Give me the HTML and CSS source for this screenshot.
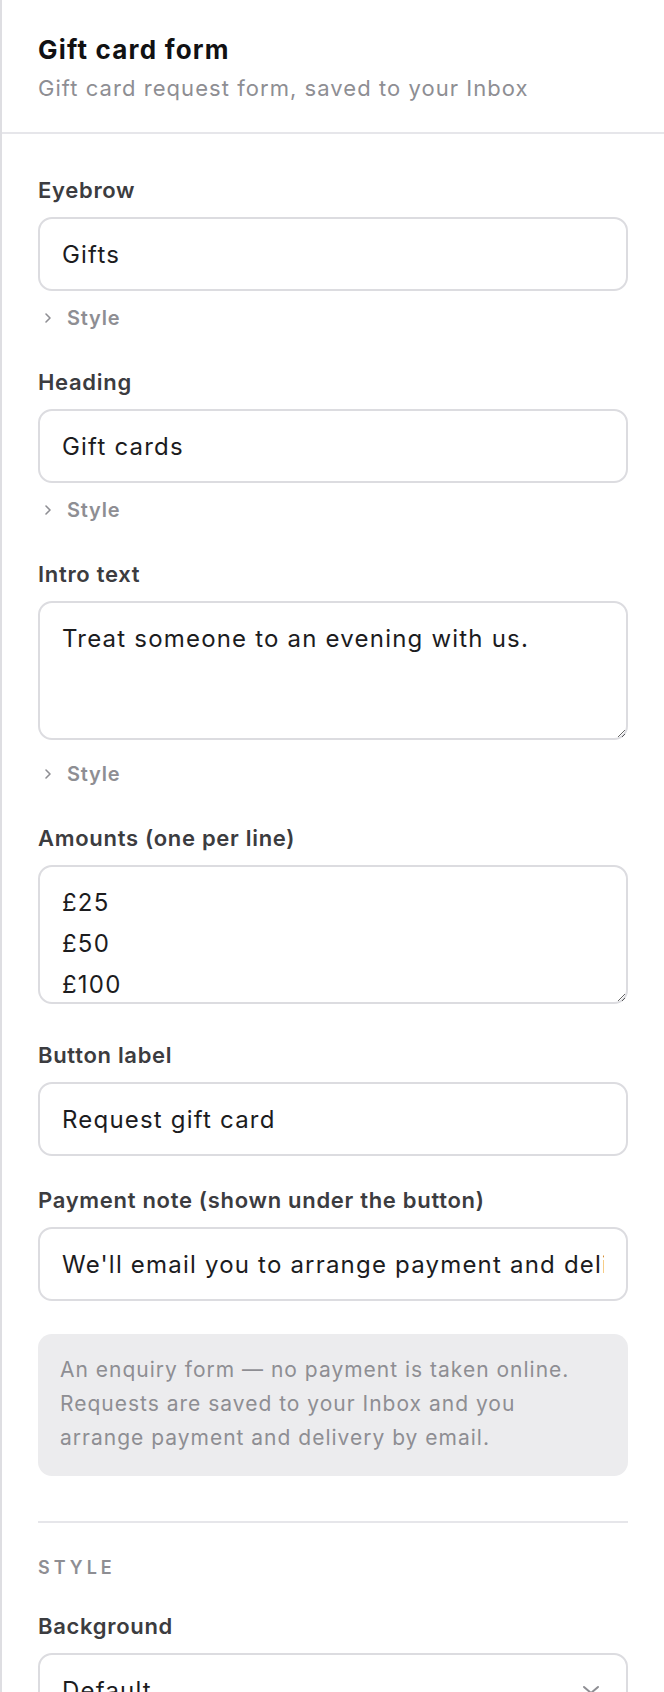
FILE: index.html
```html
<!DOCTYPE html>
<html lang="en">
<head>
<meta charset="utf-8">
<title>Gift card form</title>
<link rel="stylesheet" href="styles.css">
</head>
<body>
<div class="panel">
  <header class="panel-head">
    <h1 class="title">Gift card form</h1>
    <p class="subtitle">Gift card request form, saved to your Inbox</p>
  </header>
  <div class="panel-body">
    <div class="field has-style">
      <label class="label">Eyebrow</label>
      <input class="input" type="text" value="Gifts">
      <div class="style-toggle">
        <svg class="chev" viewBox="0 0 10 14" width="10" height="14"><polyline points="3,3 7,7 3,11" fill="none" stroke="#8e8e93" stroke-width="1.6" stroke-linecap="round" stroke-linejoin="round"/></svg>
        <span>Style</span>
      </div>
    </div>
    <div class="field has-style">
      <label class="label">Heading</label>
      <input class="input" type="text" value="Gift cards">
      <div class="style-toggle">
        <svg class="chev" viewBox="0 0 10 14" width="10" height="14"><polyline points="3,3 7,7 3,11" fill="none" stroke="#8e8e93" stroke-width="1.6" stroke-linecap="round" stroke-linejoin="round"/></svg>
        <span>Style</span>
      </div>
    </div>
    <div class="field has-style">
      <label class="label">Intro text</label>
      <textarea class="textarea">Treat someone to an evening with us.</textarea>
      <div class="style-toggle">
        <svg class="chev" viewBox="0 0 10 14" width="10" height="14"><polyline points="3,3 7,7 3,11" fill="none" stroke="#8e8e93" stroke-width="1.6" stroke-linecap="round" stroke-linejoin="round"/></svg>
        <span>Style</span>
      </div>
    </div>
    <div class="field">
      <label class="label">Amounts (one per line)</label>
      <textarea class="textarea">£25
£50
£100</textarea>
    </div>
    <div class="field">
      <label class="label">Button label</label>
      <input class="input" type="text" value="Request gift card">
    </div>
    <div class="field">
      <label class="label">Payment note (shown under the button)</label>
      <input class="input" type="text" value="We'll email you to arrange payment and delivery.">
    </div>
    <div class="note">An enquiry form — no payment is taken online. Requests are saved to your Inbox and you arrange payment and delivery by email.</div>
    <hr class="divider">
    <div class="section-title">STYLE</div>
    <div class="field">
      <label class="label">Background</label>
      <div class="select">
        <span>Default</span>
        <svg class="select-chev" viewBox="0 0 18 10" width="18" height="10"><polyline points="2,2 9,8 16,2" fill="none" stroke="#8e8e93" stroke-width="2" stroke-linecap="round" stroke-linejoin="round"/></svg>
      </div>
    </div>
  </div>
</div>
</body>
</html>
```
FILE: styles.css
```css
* { box-sizing: border-box; }
html, body { margin: 0; padding: 0; background: #ffffff; }
body {
  font-family: Inter, "Noto Sans", "DejaVu Sans", sans-serif;
  color: #1c1c1e;
}
.panel {
  border-left: 2px solid #dedee2;
  min-height: 1692px;
}
.panel-head {
  padding: 35px 36px 29px;
  border-bottom: 2px solid #e6e6ea;
}
.title {
  margin: 0;
  font-size: 26px;
  line-height: 30px;
  font-weight: 700;
  color: #111113;
  letter-spacing: 1.2px;
}
.subtitle {
  margin: 8px 0 0;
  font-size: 22px;
  line-height: 30px;
  color: #8e8e93;
  font-weight: 400;
  letter-spacing: 1.05px;
}
.panel-body {
  padding: 42px 36px 0;
  display: flex;
  flex-direction: column;
}
.field {
  display: flex;
  flex-direction: column;
  margin-bottom: 30px;
}
.field.has-style { margin-bottom: 36px; }
.label {
  font-size: 22px;
  line-height: 28px;
  font-weight: 600;
  color: #3c3c40;
  letter-spacing: 0.7px;
  margin-bottom: 13px;
}
.input, .textarea {
  display: block;
  width: 100%;
  font-family: inherit;
  font-size: 24px;
  letter-spacing: 1.2px;
  color: #1c1c1e;
  background: #fff;
  border: 2px solid #dcdce0;
  border-radius: 14px;
  padding: 0 22px;
  outline: none;
}
.input {
  height: 74px;
}
.textarea {
  height: 139px;
  line-height: 41px;
  padding: 15px 22px;
  resize: vertical;
  overflow: hidden;
  margin-bottom: 7px;
}
.style-toggle {
  display: flex;
  align-items: center;
  gap: 14px;
  margin-top: 13px;
  height: 28px;
  padding-left: 5px;
  font-size: 20px;
  font-weight: 600;
  letter-spacing: 0.8px;
  color: #8e8e93;
}
.textarea + .style-toggle { margin-top: 13px; }
.note {
  background: #ececee;
  border-radius: 14px;
  padding: 19px 22px 21px;
  font-size: 21px;
  line-height: 34px;
  letter-spacing: 1px;
  color: #8e8e93;
  margin-top: 3px;
}
.divider {
  border: 0;
  border-top: 2px solid #e6e6ea;
  margin: 45px 0 0;
}
.section-title {
  margin-top: 33px;
  font-size: 18px;
  line-height: 24px;
  font-weight: 600;
  letter-spacing: 4px;
  color: #8e8e93;
  margin-bottom: 32px;
}
.select {
  height: 74px;
  border: 2px solid #dcdce0;
  border-radius: 14px;
  padding: 0 26px 0 22px;
  display: flex;
  align-items: center;
  justify-content: space-between;
  font-size: 24px;
  letter-spacing: 1.2px;
  color: #1c1c1e;
}
```
